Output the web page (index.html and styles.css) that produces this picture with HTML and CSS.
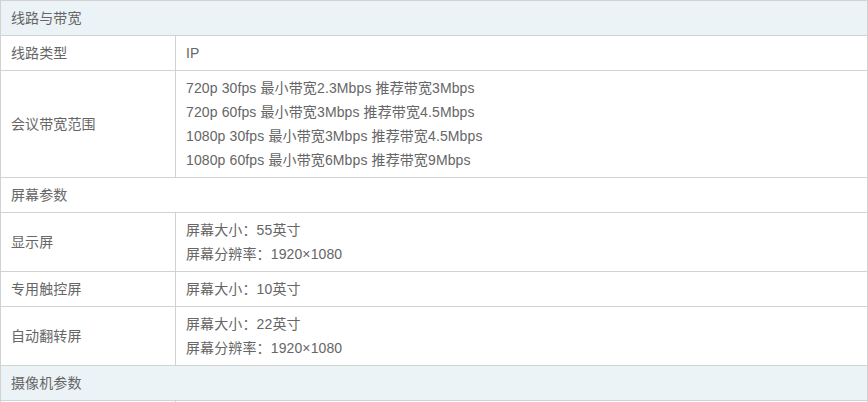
FILE: index.html
```html
<!DOCTYPE html>
<html lang="zh-CN">
<head>
<meta charset="utf-8">
<title>参数</title>
<link rel="stylesheet" href="styles.css">
</head>
<body>
<table class="spec">
  <colgroup><col class="c1"><col class="c2"></colgroup>
  <tbody>
    <tr class="group"><td colspan="2">线路与带宽</td></tr>
    <tr><td>线路类型</td><td>IP</td></tr>
    <tr><td>会议带宽范围</td><td>720p 30fps 最小带宽2.3Mbps 推荐带宽3Mbps<br>720p 60fps 最小带宽3Mbps 推荐带宽4.5Mbps<br>1080p 30fps 最小带宽3Mbps 推荐带宽4.5Mbps<br>1080p 60fps 最小带宽6Mbps 推荐带宽9Mbps</td></tr>
    <tr class="group plain"><td colspan="2">屏幕参数</td></tr>
    <tr><td>显示屏</td><td>屏幕大小：55英寸<br>屏幕分辨率：1920×1080</td></tr>
    <tr><td>专用触控屏</td><td>屏幕大小：10英寸</td></tr>
    <tr><td>自动翻转屏</td><td>屏幕大小：22英寸<br>屏幕分辨率：1920×1080</td></tr>
    <tr class="group"><td colspan="2">摄像机参数</td></tr>
    <tr><td>&nbsp;</td><td>&nbsp;</td></tr>
  </tbody>
</table>
</body>
</html>
```

FILE: styles.css
```css
html, body {
  margin: 0;
  padding: 0;
  background: #fff;
}
.spec {
  border-collapse: collapse;
  width: 868px;
  table-layout: fixed;
  font-family: "Liberation Sans", "Noto Sans CJK SC", sans-serif;
  font-size: 14px;
  letter-spacing: 0.12px;
  color: #666;
}
.spec .c1 { width: 175px; }
.spec td {
  border: 1px solid #d2d2d2;
  padding: 5px 10px;
  line-height: 24px;
  vertical-align: middle;
  text-align: left;
}
.spec .group td {
  background: #ebf3f7;
}
.spec .group.plain td {
  background: #fff;
}
```
